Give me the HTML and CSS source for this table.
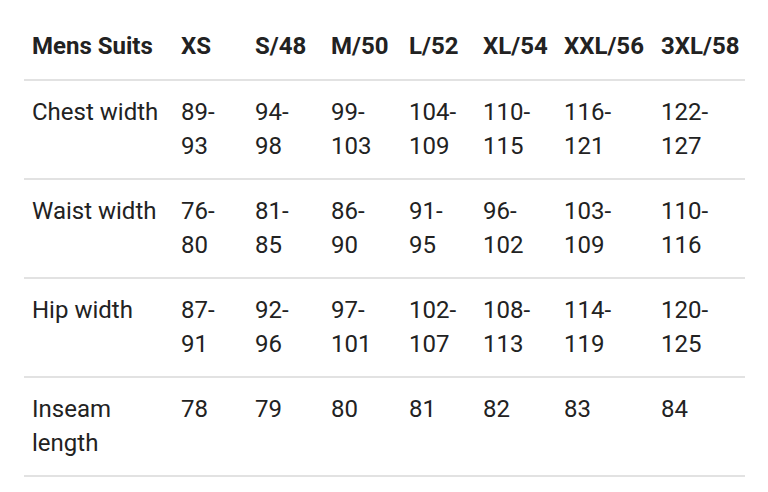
FILE: index.html
```html
<!DOCTYPE html>
<html lang="en">
<head>
<meta charset="utf-8">
<title>Mens Suits size chart</title>
<link rel="stylesheet" href="styles.css">
</head>
<body>
<div class="wrap">
<table class="chart">
  <colgroup>
    <col class="c0"><col class="c1"><col class="c2"><col class="c3"><col class="c4"><col class="c5"><col class="c6"><col class="c7">
  </colgroup>
  <thead>
    <tr><th>Mens Suits</th><th>XS</th><th>S/48</th><th>M/50</th><th>L/52</th><th>XL/54</th><th>XXL/56</th><th>3XL/58</th></tr>
  </thead>
  <tbody>
    <tr><td>Chest width</td><td>89-93</td><td>94-98</td><td>99-103</td><td>104-109</td><td>110-115</td><td>116-121</td><td>122-127</td></tr>
    <tr><td>Waist width</td><td>76-80</td><td>81-85</td><td>86-90</td><td>91-95</td><td>96-102</td><td>103-109</td><td>110-116</td></tr>
    <tr><td>Hip width</td><td>87-91</td><td>92-96</td><td>97-101</td><td>102-107</td><td>108-113</td><td>114-119</td><td>120-125</td></tr>
    <tr><td>Inseam length</td><td>78</td><td>79</td><td>80</td><td>81</td><td>82</td><td>83</td><td>84</td></tr>
  </tbody>
</table>
</div>
</body>
</html>
```
FILE: styles.css
```css
html, body {
  margin: 0;
  padding: 0;
  background: #fff;
}
.wrap {
  padding: 15px 23px 0 24px;
}
.chart {
  border-collapse: collapse;
  table-layout: fixed;
  width: 721px;
  font-family: Roboto, "Noto Sans", sans-serif;
  font-size: 24px;
  line-height: 34px;
  color: #222;
}
.c0 { width: 149px; }
.c1 { width: 74px; }
.c2 { width: 76px; }
.c3 { width: 78px; }
.c4 { width: 74px; }
.c5 { width: 81px; }
.c6 { width: 97px; }
.c7 { width: 92px; }
.chart th,
.chart td {
  text-align: left;
  vertical-align: top;
  padding: 14px 10px 15px 8px;
  border-bottom: 2px solid #e2e2e2;
}
.chart th {
  font-weight: 700;
  white-space: nowrap;
  padding-bottom: 16px;
}
.chart td:nth-child(7) {
  padding-right: 19px;
}
.chart td:nth-child(8) {
  padding-right: 14px;
}
```
